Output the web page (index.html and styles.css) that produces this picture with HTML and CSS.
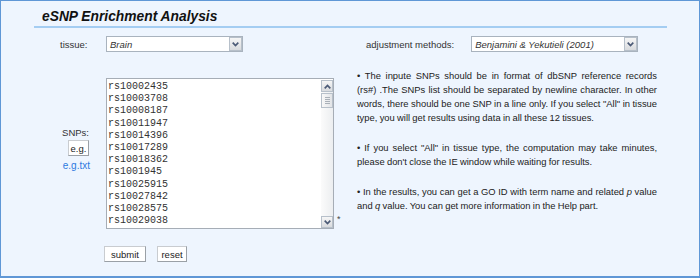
FILE: index.html
```html
<!DOCTYPE html>
<html lang="en">
<head>
    <meta charset="UTF-8" />
    <title>eSNP Enrichment Analysis</title>
    <link rel="stylesheet" href="styles.css">
</head>
<body>
    <div class="panel">
        <h2 class="title">eSNP Enrichment Analysis</h2>

        <form class="form" onsubmit="return false">
            <label class="lbl tissue-lbl">tissue:</label>
            <div class="select tissue-sel">
                <span class="value">Brain</span>
                <span class="arrow"><svg width="7" height="5" viewBox="0 0 7 5"><path d="M0.7 0.7 L3.5 3.5 L6.3 0.7" /></svg></span>
            </div>
            <div class="adjust">
                <label class="lbl">adjustment methods:</label>
                <div class="select adjust-sel">
                    <span class="value">Benjamini &amp; Yekutieli (2001)</span>
                    <span class="arrow"><svg width="7" height="5" viewBox="0 0 7 5"><path d="M0.7 0.7 L3.5 3.5 L6.3 0.7" /></svg></span>
                </div>
            </div>

            <div class="snp-side">
                <label class="lbl">SNPs:</label>
                <button type="button" class="btn eg">e.g.</button>
                <a href="#" class="eg-link">e.g.txt</a>
            </div>
            <div class="snp-box">
                <div class="textarea">
                    <div class="lines">
                        <div>rs10002435</div>
                        <div>rs10003708</div>
                        <div>rs10008187</div>
                        <div>rs10011947</div>
                        <div>rs10014396</div>
                        <div>rs10017289</div>
                        <div>rs10018362</div>
                        <div>rs1001945</div>
                        <div>rs10025915</div>
                        <div>rs10027842</div>
                        <div>rs10028575</div>
                        <div>rs10029038</div>
                    </div>
                    <!-- fake scrollbar -->
                    <div class="scroll">
                        <span class="sb-btn"><svg width="7" height="5" viewBox="0 0 7 5"><path d="M0.7 4.3 L3.5 1.5 L6.3 4.3" /></svg></span>
                        <span class="thumb"><i></i><i></i><i></i><i></i></span>
                        <span class="track"></span>
                        <span class="sb-btn"><svg width="7" height="5" viewBox="0 0 7 5"><path d="M0.7 0.7 L3.5 3.5 L6.3 0.7" /></svg></span>
                    </div>
                </div>
                <span class="req">*</span>
            </div>
            <div class="notes">
                <p>
                    <span class="ln">&bull; The inpute SNPs should be in format of dbSNP reference records</span>
                    <span class="ln">(rs#) .The SNPs list should be separated by newline character. In other</span>
                    <span class="ln">words, there should be one SNP in a line only. If you select "All" in tissue</span>
                    <span class="end">type, you will get results using data in all these 12 tissues.</span>
                </p>
                <p>
                    <span class="ln">&bull; If you select "All" in tissue type, the computation may take minutes,</span>
                    <span class="end">please don't close the IE window while waiting for results.</span>
                </p>
                <p>
                    <span class="ln">&bull; In the results, you can get a GO ID with term name and related <i>p</i> value</span>
                    <span class="end">and <i>q</i> value. You can get more information in the Help part.</span>
                </p>
            </div>

            <div class="actions">
                <button type="submit" class="btn submit">submit</button>
                <button type="reset" class="btn reset">reset</button>
            </div>
        </form>
    </div>
</body>
</html>
```

FILE: styles.css
```css
body {
    margin: 0;
    font-family: "Liberation Sans", Arial, sans-serif;
    font-size: 9.5px;
    color: #222;
}
.panel {
    width: 700px;
    height: 278px;
    box-sizing: border-box;
    border: 1px solid #5f97d6;
    border-bottom-width: 2px;
    background-color: #eef5fe;
}
.title {
    margin: 0 32px 0 33px;
    padding: 7px 0 0 8px;
    height: 18px;
    line-height: 18px;
    font-size: 13.8px;
    font-style: italic;
    font-weight: bold;
    color: #111;
    border-bottom: 2px solid #a4cdf2;
}
.form {
    display: grid;
    grid-template-columns: 105px 239px 1fr;
    row-gap: 17px;
    margin-top: 8px;
}
.lbl {
    color: #333;
}
.tissue-lbl {
    padding-left: 59px;
    align-self: center;
}
.select {
    display: flex;
    align-items: center;
    height: 16px;
    box-sizing: border-box;
    border: 1px solid #a9b3be;
    background-color: #fff;
}
.select .value {
    flex: 1;
    padding-left: 3px;
    font-style: italic;
    color: #333;
}
.tissue-sel {
    width: 137px;
}
.adjust {
    display: flex;
    align-items: center;
    padding-left: 21px;
}
.adjust-sel {
    width: 167px;
    margin-left: 17px;
}
.arrow,
.sb-btn {
    display: flex;
    align-items: center;
    justify-content: center;
    box-sizing: border-box;
    border: 1px solid #b7c0ca;
    background: linear-gradient(#f6f6f6, #d9dbde);
}
.arrow {
    width: 13px;
    height: 14px;
}
.arrow svg path,
.sb-btn svg path {
    fill: none;
    stroke: #4b5a76;
    stroke-width: 1.7;
}
.snp-side {
    display: flex;
    flex-direction: column;
    align-items: flex-end;
    justify-content: center;
    padding-right: 17px;
}
.eg {
    margin-top: 2px;
    width: 21px;
}
.eg-link {
    margin-top: 4px;
    margin-right: -1px;
    font-size: 10px;
    color: #2d7ae0;
    text-decoration: none;
}
.btn {
    height: 16px;
    padding: 0;
    font-family: inherit;
    font-size: 9.5px;
    color: #222;
    background-color: #fff;
    border: 1px solid;
    border-color: #c9ccd0 #9aa0a6 #9aa0a6 #c9ccd0;
}
.snp-box {
    display: flex;
    align-items: flex-end;
}
.textarea {
    display: flex;
    width: 228px;
    height: 151px;
    box-sizing: border-box;
    border: 1px solid #a6adb6;
    background-color: #fff;
}
.lines {
    flex: 1;
    padding: 2px 0 0 1px;
    font-family: "Liberation Mono", "Courier New", monospace;
    font-size: 10px;
    line-height: 12.2px;
    color: #333;
    overflow: hidden;
}
.scroll {
    display: flex;
    flex-direction: column;
    width: 12px;
    margin: 1px 0 0 0;
    background: linear-gradient(90deg, #fbfbfb, #eceef0);
}
.sb-btn {
    height: 12px;
}
.thumb {
    display: flex;
    flex-direction: column;
    align-items: center;
    justify-content: center;
    gap: 1px;
    height: 15px;
    margin-top: 1px;
    box-sizing: border-box;
    border: 1px solid #b7c0ca;
    background: linear-gradient(90deg, #f8f8f8, #e2e4e7);
}
.thumb i {
    display: block;
    width: 5px;
    height: 1px;
    background-color: #a9b0b8;
}
.track {
    flex: 1;
}
.req {
    margin: 0 0 5px 3px;
    font-size: 9px;
    color: #444;
}
.notes {
    padding-left: 12px;
    width: 300px;
}
.notes p {
    margin: 0 0 16px;
    font-size: 9.4px;
    line-height: 14px;
    word-spacing: -0.3px;
}
/* each visual line is justified on its own, the last one is left as is */
.notes .ln {
    display: block;
    text-align: justify;
    text-align-last: justify;
}
.notes .end {
    display: block;
}
.actions {
    grid-column: 1 / -1;
    display: flex;
    gap: 11px;
    padding-left: 103px;
}
.submit {
    width: 42px;
}
.reset {
    width: 30px;
}
```
